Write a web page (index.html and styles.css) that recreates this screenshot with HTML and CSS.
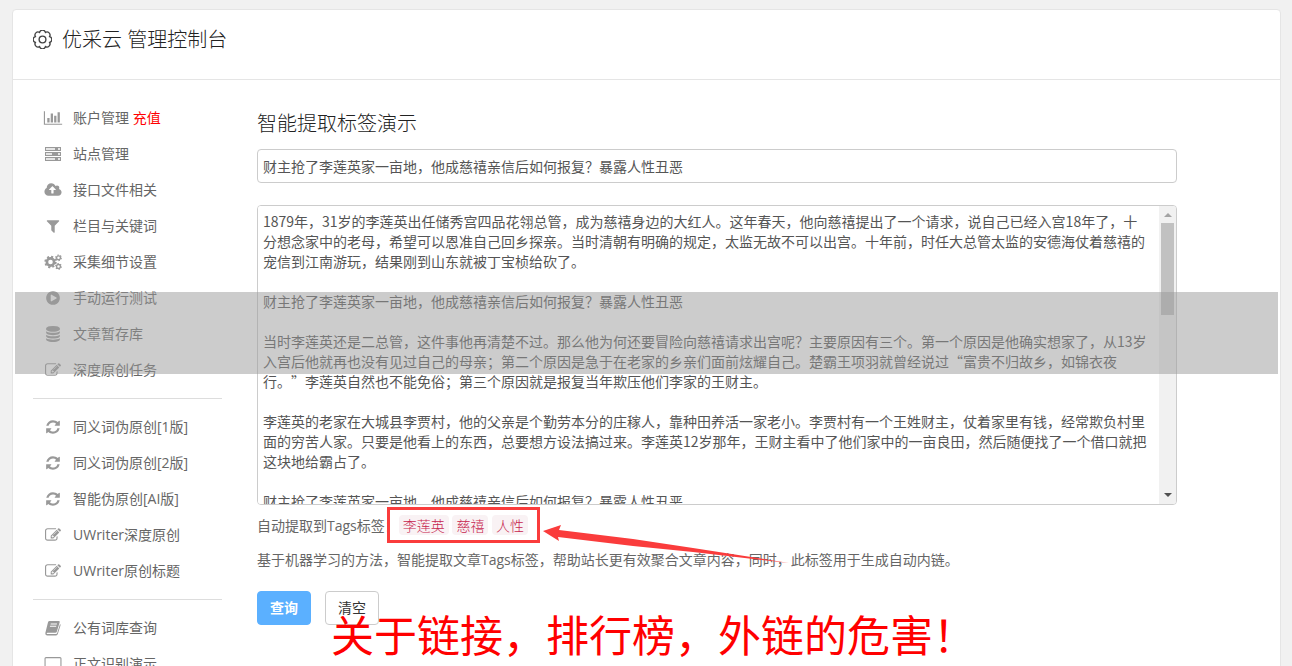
FILE: index.html
```html
<!DOCTYPE html>
<html lang="zh-CN">
<head>
    <meta charset="utf-8">
    <title>优采云 管理控制台</title>
    <link rel="stylesheet" href="styles.css">
</head>
<body>
    <svg class="sprite" xmlns="http://www.w3.org/2000/svg">
        <symbol id="i-chart" viewBox="0 0 2048 1792"><path d="M640 896v512h-256v-512h256zm384-512v1024h-256v-1024h256zm1024 1152v128h-2048v-1536h128v1408h1920zm-640-896v768h-256v-768h256zm384-384v1152h-256v-1152h256z"/></symbol>
        <symbol id="i-server" viewBox="0 0 18 16"><path fill-rule="evenodd" d="M1 1h16v4H1zm1 1.300v1.400h9V2.300zM14 2.300v1.400h2V2.300zM1 6h16v4H1zm1 1.300v1.400h6V7.300zM14 7.300v1.400h2V7.300zM1 11h16v4H1zm1 1.300v1.400h9v-1.400zM14 12.300v1.400h2v-1.400z"/></symbol>
        <symbol id="i-cloud" viewBox="0 0 1920 1792"><path d="M1280 864q0-14-9-23l-352-352q-9-9-23-9t-23 9l-351 351q-10 12-10 24 0 14 9 23t23 9h224v352q0 13 9.500 22.500t22.500 9.500h192q13 0 22.500-9.500t9.500-22.500v-352h224q13 0 22.500-9.500t9.500-22.500zm640 288q0 159-112.500 271.500t-271.500 112.500h-1088q-185 0-316.500-131.500t-131.500-316.500q0-130 70-240t188-165q-2-30-2-43 0-212 150-362t362-150q156 0 285.500 87t188.500 231q71-62 166-62 106 0 181 75t75 181q0 76-41 138 130 31 213.500 135.500t83.500 238.500z"/></symbol>
        <symbol id="i-filter" viewBox="0 0 1792 1792"><path d="M1595 295q17 41-14 70l-493 493v742q0 42-39 59-13 5-25 5-27 0-45-19l-256-256q-19-19-19-45v-486l-493-493q-31-29-14-70 17-39 59-39h1280q42 0 59 39z"/></symbol>
        <symbol id="i-cogs" viewBox="0 0 18 16">
            <g fill="none" stroke="currentColor">
                <circle cx="6.500" cy="8" r="3.600" stroke-width="2.600"/>
                <circle cx="6.500" cy="8" r="5.300" stroke-width="1.800" stroke-dasharray="2.100 2.060"/>
                <circle cx="14.500" cy="3.800" r="1.900" stroke-width="1.300"/>
                <circle cx="14.500" cy="3.800" r="2.800" stroke-width="1.200" stroke-dasharray="1.400 1.530"/>
                <circle cx="14.500" cy="12.400" r="1.900" stroke-width="1.300"/>
                <circle cx="14.500" cy="12.400" r="2.800" stroke-width="1.200" stroke-dasharray="1.400 1.530"/>
            </g>
        </symbol>
        <symbol id="i-play" viewBox="0 0 1792 1792"><path d="M896 128q209 0 385.500 103t279.500 279.500 103 385.500-103 385.500-279.500 279.500-385.500 103-385.500-103-279.500-279.500-103-385.500 103-385.500 279.500-279.500 385.500-103zm384 823q32-18 32-55t-32-55l-544-320q-31-19-64-1-32 19-32 56v640q0 37 32 56 16 8 32 8 17 0 32-9z"/></symbol>
        <symbol id="i-database" viewBox="0 0 1792 1792"><path d="M896 768q237 0 443-43t325-127v170q0 69-103 128t-280 93.500-385 34.500-385-34.500-280-93.500-103-128v-170q119 84 325 127t443 43zm0 768q237 0 443-43t325-127v170q0 69-103 128t-280 93.500-385 34.500-385-34.500-280-93.500-103-128v-170q119 84 325 127t443 43zm0-384q237 0 443-43t325-127v170q0 69-103 128t-280 93.500-385 34.500-385-34.500-280-93.500-103-128v-170q119 84 325 127t443 43zm0-1152q208 0 385 34.500t280 93.500 103 128v128q0 69-103 128t-280 93.500-385 34.500-385-34.500-280-93.500-103-128v-128q0-69 103-128t280-93.500 385-34.500z"/></symbol>
        <symbol id="i-edit" viewBox="0 0 1792 1792"><path d="M888 1184l116-116-152-152-116 116v56h96v96h56zm440-720q-16-16-33 1l-350 350q-17 17-1 33t33-1l350-350q17-17 1-33zm80 594v190q0 119-84.500 203.500t-203.500 84.500h-832q-119 0-203.500-84.500t-84.500-203.500v-832q0-119 84.500-203.500t203.500-84.500h832q63 0 117 25 15 7 18 23 3 17-9 29l-49 49q-14 14-32 8-23-6-45-6h-832q-66 0-113 47t-47 113v832q0 66 47 113t113 47h832q66 0 113-47t47-113v-126q0-13 9-22l64-64q15-15 35-7t20 29zm-96-738l288 288-672 672h-288v-288zm444 132l-92 92-288-288 92-92q28-28 68-28t68 28l152 152q28 28 28 68t-28 68z"/></symbol>
        <symbol id="i-refresh" viewBox="0 0 1792 1792"><path d="M1639 1056q0 5-1 7-64 268-268 434.500t-478 166.500q-146 0-282.500-55t-243.500-157l-129 129q-19 19-45 19t-45-19-19-45v-448q0-26 19-45t45-19h448q26 0 45 19t19 45-19 45l-137 137q71 66 161 102t187 36q134 0 250-65t186-179q11-17 53-117 8-23 30-23h192q13 0 22.500 9.500t9.500 22.500zm25-800v448q0 26-19 45t-45 19h-448q-26 0-45-19t-19-45 19-45l138-138q-148-137-349-137-134 0-250 65t-186 179q-11 17-53 117-8 23-30 23h-199q-13 0-22.500-9.500t-9.500-22.500v-7q65-268 270-434.500t480-166.500q146 0 284 55.500t245 156.500l130-129q19-19 45-19t45 19 19 45z"/></symbol>
        <symbol id="i-book" viewBox="0 0 18 16"><path fill-rule="evenodd" d="M5.500 1h9.300q1.200 0 .9 1.200l-2.900 9.600q-.3 1-1.500 1H3.600q-1 0-.9.700.1.500 1 .5h8.300q.9 0 1.200-.9l2.800-9.200q.8.400.5 1.500l-2.700 8.700q-.4 1.300-1.700 1.300H3.400Q1 15.400 1.400 12.800L4 2.300Q4.400 1 5.500 1zm1.300 2.500-.3 1h6.300l.3-1zm-.7 2.300-.3 1h6.300l.3-1z"/></symbol>
        <symbol id="i-desktop" viewBox="0 0 18 16"><path fill-rule="evenodd" d="M2 1h14q1.500 0 1.500 1.500v9Q17.500 13 16 13h-4.500v2H13v1H5v-1h1.500v-2H2Q.5 13 .5 11.500v-9Q.5 1 2 1zm0 1.200q-.4 0-.4.400v7.800h14.800V2.600q0-.4-.4-.4z"/></symbol>
    </svg>

    <div class="panel">
        <div class="header">
            <svg class="gear" viewBox="0 0 18 18"><path d="M15.740 11.790A2.900 2.900 0 0 1 11.790 15.740 2.900 2.900 0 0 1 6.210 15.740 2.900 2.900 0 0 1 2.260 11.790 2.900 2.900 0 0 1 2.260 6.210 2.900 2.900 0 0 1 6.210 2.260 2.900 2.900 0 0 1 11.790 2.260 2.900 2.900 0 0 1 15.740 6.210 2.900 2.900 0 0 1 15.740 11.790z"/><circle cx="9" cy="9" r="3.200"/></svg>
            <h1>优采云 管理控制台</h1>
        </div>

        <div class="body">
            <nav class="sidebar">
                <a href="#"><svg><use href="#i-chart"/></svg><span>账户管理 <em>充值</em></span></a>
                <a href="#"><svg><use href="#i-server"/></svg>站点管理</a>
                <a href="#"><svg><use href="#i-cloud"/></svg>接口文件相关</a>
                <a href="#"><svg><use href="#i-filter"/></svg>栏目与关键词</a>
                <a href="#"><svg><use href="#i-cogs"/></svg>采集细节设置</a>
                <a href="#"><svg><use href="#i-play"/></svg>手动运行测试</a>
                <a href="#"><svg><use href="#i-database"/></svg>文章暂存库</a>
                <a href="#"><svg><use href="#i-edit"/></svg>深度原创任务</a>
                <hr>
                <a href="#"><svg><use href="#i-refresh"/></svg>同义词伪原创[1版]</a>
                <a href="#"><svg><use href="#i-refresh"/></svg>同义词伪原创[2版]</a>
                <a href="#"><svg><use href="#i-refresh"/></svg>智能伪原创[AI版]</a>
                <a href="#"><svg><use href="#i-edit"/></svg>UWriter深度原创</a>
                <a href="#"><svg><use href="#i-edit"/></svg>UWriter原创标题</a>
                <hr>
                <a href="#"><svg><use href="#i-book"/></svg>公有词库查询</a>
                <a href="#"><svg><use href="#i-desktop"/></svg>正文识别演示</a>
            </nav>

            <form class="content">
                <h2>智能提取标签演示</h2>
                <input type="text" class="title-input" aria-label="文章标题" value="财主抢了李莲英家一亩地，他成慈禧亲信后如何报复？暴露人性丑恶">
                <div class="article">
                    <textarea aria-label="文章内容">1879年，31岁的李莲英出任储秀宫四品花翎总管，成为慈禧身边的大红人。这年春天，他向慈禧提出了一个请求，说自己已经入宫18年了，十分想念家中的老母，希望可以恩准自己回乡探亲。当时清朝有明确的规定，太监无故不可以出宫。十年前，时任大总管太监的安德海仗着慈禧的宠信到江南游玩，结果刚到山东就被丁宝桢给砍了。

财主抢了李莲英家一亩地，他成慈禧亲信后如何报复？暴露人性丑恶

当时李莲英还是二总管，这件事他再清楚不过。那么他为何还要冒险向慈禧请求出宫呢？主要原因有三个。第一个原因是他确实想家了，从13岁入宫后他就再也没有见过自己的母亲；第二个原因是急于在老家的乡亲们面前炫耀自己。楚霸王项羽就曾经说过“富贵不归故乡，如锦衣夜行。”李莲英自然也不能免俗；第三个原因就是报复当年欺压他们李家的王财主。

李莲英的老家在大城县李贾村，他的父亲是个勤劳本分的庄稼人，靠种田养活一家老小。李贾村有一个王姓财主，仗着家里有钱，经常欺负村里面的穷苦人家。只要是他看上的东西，总要想方设法搞过来。李莲英12岁那年，王财主看中了他们家中的一亩良田，然后随便找了一个借口就把这块地给霸占了。

财主抢了李莲英家一亩地，他成慈禧亲信后如何报复？暴露人性丑恶</textarea>
                    <div class="scrollbar">
                        <i class="up"></i>
                        <i class="thumb"></i>
                        <i class="down"></i>
                    </div>
                </div>
                <div class="tags">
                    自动提取到Tags标签：<code>李莲英</code>
                    <code>慈禧</code>
                    <code>人性</code>
                    <div class="mark"></div>
                    <svg class="arrow" viewBox="0 0 246 42"><path d="M0 9 18 3 16 8 90 17 150 26 246 41 150 30 90 24 15 15 16 19z"/></svg>
                </div>
                <p>基于机器学习的方法，智能提取文章Tags标签，帮助站长更有效聚合文章内容，同时，此标签用于生成自动内链。</p>
                <div class="buttons">
                    <button type="button" class="primary">查询</button>
                    <button type="reset">清空</button>
                </div>
            </form>
        </div>
    </div>

    <div class="band"></div>
    <div class="caption">关于链接，排行榜，外链的危害！</div>
</body>
</html>
```

FILE: styles.css
```css
* {
    box-sizing: border-box;
}
body {
    margin: 0;
    padding: 9px 11px 0 12px;
    background-color: #f1f1f1;
    font-family: "Open Sans", "Noto Sans CJK SC", sans-serif;
    font-size: 14px;
    line-height: 20px;
    color: #666;
}
.sprite {
    display: none;
}
.panel {
    background: white;
    border: 1px solid #e5e5e5;
    border-radius: 4px;
}
.header {
    display: flex;
    align-items: center;
    gap: 10px;
    height: 70px;
    padding: 0 20px 10px;
    border-bottom: 1px solid #e5e5e5;
}
.gear {
    width: 19px;
    height: 19px;
    fill: none;
    stroke: #444;
    stroke-width: 1.3;
}
h1, h2 {
    margin: 0;
    font-size: 20px;
    font-weight: 300;
    line-height: 30px;
    color: #222;
}
.body {
    display: flex;
    gap: 35px;
    padding: 20px;
}
.sidebar {
    flex: none;
    width: 189px;
}
.sidebar a {
    display: flex;
    align-items: center;
    gap: 10px;
    height: 36px;
    padding-left: 10px;
    color: #666;
    text-decoration: none;
}
.sidebar svg {
    width: 20px;
    height: 16px;
    fill: #999;
    color: #999;
}
.sidebar em {
    font-style: normal;
    color: red;
}
.sidebar hr {
    margin: 10px 0;
    border: 0;
    border-top: 1px solid #ddd;
}
.content {
    flex: 1;
    max-width: 920px;
    padding-top: 9px;
}
.title-input {
    display: block;
    width: 100%;
    height: 34px;
    margin: 10px 0 22px;
    padding: 4px 5px;
    border: 1px solid #ccc;
    border-radius: 4px;
    font: inherit;
    color: #555;
}
.article {
    display: flex;
    height: 300px;
    border: 1px solid #ccc;
    border-radius: 4px;
    overflow: hidden;
}
.article textarea {
    flex: 1;
    padding: 5px 10px 5px 5px;
    border: 0;
    outline: 0;
    resize: none;
    overflow: hidden;
    font: 14px/20px "Noto Sans CJK SC", sans-serif;
    text-spacing-trim: space-all;
    color: #555;
}
.scrollbar {
    display: flex;
    flex-direction: column;
    align-items: center;
    width: 17px;
    padding: 7px 0;
    background: #f1f1f1;
}
.up, .down {
    border: 4px solid transparent;
}
.up {
    border-top: 0;
    border-bottom-color: #a3a3a3;
}
.down {
    margin-top: auto;
    border-bottom: 0;
    border-top-color: #505050;
}
.thumb {
    width: 13px;
    height: 92px;
    margin-top: 6px;
    background: #c1c1c1;
}
.tags {
    position: relative;
    margin-top: 11px;
}
.tags code {
    padding: 0 4px;
    border-radius: 4px;
    background: #f9f2f4;
    font-family: "Noto Sans CJK SC", sans-serif;
    font-size: 14px;
    font-weight: 300;
    line-height: 18px;
    color: #c7254e;
}
/* red box round the tags, arrow pointing at it */
.mark {
    position: absolute;
    left: 130px;
    top: -9px;
    width: 153px;
    height: 36px;
    border: 3px solid #fa3c3c;
}
.arrow {
    position: absolute;
    left: 286px;
    top: 6px;
    width: 246px;
    height: 42px;
    fill: #fa3c3c;
}
.content p {
    margin: 14px 0 21px;
}
.buttons {
    display: flex;
    gap: 14px;
}
button {
    height: 34px;
    padding: 0 12px;
    border: 1px solid #ccc;
    border-radius: 4px;
    background: white;
    font: inherit;
    color: #333;
    cursor: pointer;
}
button.primary {
    border-color: #5bb0ff;
    background: #5bb0ff;
    font-weight: bold;
    color: white;
}
.band {
    position: absolute;
    left: 15px;
    right: 14px;
    top: 292px;
    height: 82px;
    background: rgba(153, 153, 153, 0.5);
}
.caption {
    position: absolute;
    left: 331px;
    top: 606px;
    font-size: 43px;
    line-height: 60px;
    white-space: nowrap;
    color: red;
}
```
